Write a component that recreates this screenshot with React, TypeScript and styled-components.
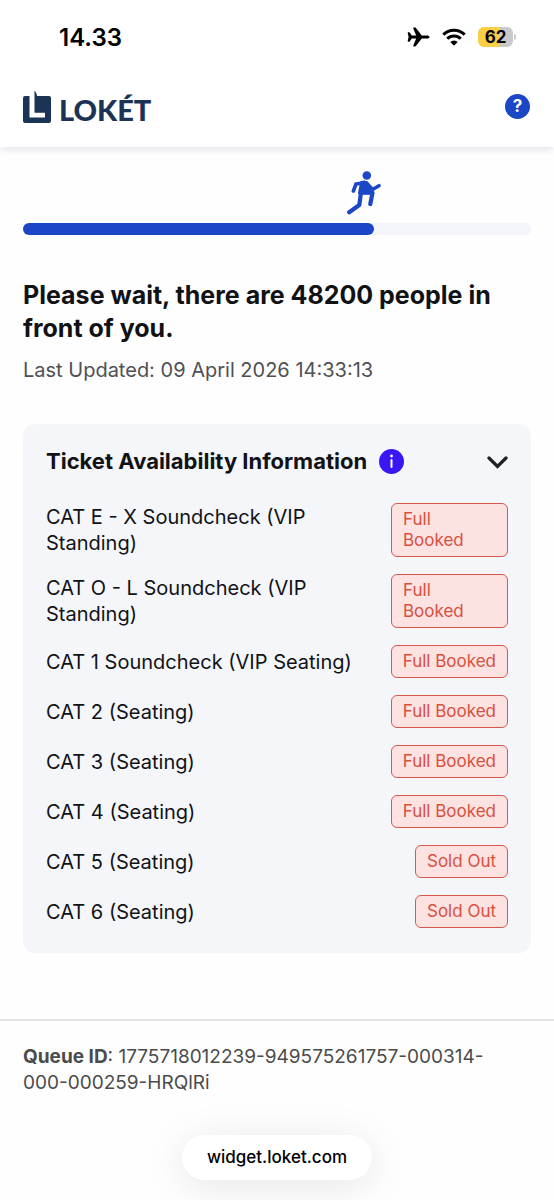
import React, { useState } from "react";
import styled, { createGlobalStyle } from "styled-components";

const GlobalStyle = createGlobalStyle`
  *, *::before, *::after { box-sizing: border-box; }
  body {
    margin: 0;
    background: #fefefe;
    color: #111216;
    font-family: Inter, "Liberation Sans", sans-serif;
  }
  button { font: inherit; color: inherit; }
`;

const Page = styled.div`
  display: flex;
  flex-direction: column;
  min-height: 100vh;
`;

const Top = styled.div`
  background: #fff;
  box-shadow: 0 2px 8px rgba(60, 65, 120, 0.16);
`;

const StatusBar = styled.div`
  display: flex;
  align-items: center;
  justify-content: space-between;
  height: 74px;
  padding: 0 41px 0 59px;
  color: #000;
`;

const Clock = styled.time`
  font-size: 24px;
  font-weight: 600;
`;

const StatusIcons = styled.div`
  display: flex;
  align-items: center;
  gap: 12px;
`;

const Battery = styled.div`
  position: relative;
  width: 35px;
  height: 20px;
  border-radius: 6px;
  background: linear-gradient(90deg, #f9cf45 62%, #c9c9cb 62%);
  font-size: 17px;
  font-weight: 700;
  line-height: 20px;
  text-align: center;

  &::after {
    content: "";
    position: absolute;
    top: 7px;
    right: -3px;
    width: 2px;
    height: 6px;
    border-radius: 0 2px 2px 0;
    background: #c9c9cb;
  }
`;

const Header = styled.header`
  display: flex;
  align-items: center;
  justify-content: space-between;
  height: 73px;
  padding: 0 24px 8px 23px;
`;

const Brand = styled.a`
  display: flex;
  align-items: center;
  gap: 7px;
  color: #1b3354;
  text-decoration: none;
`;

const Wordmark = styled.span`
  padding-top: 6px;
  font-family: Lato, sans-serif;
  font-size: 29px;
  font-weight: 900;
  line-height: 32px;
`;

const RoundButton = styled.button<{ $color: string }>`
  display: flex;
  align-items: center;
  justify-content: center;
  width: 25px;
  height: 25px;
  padding: 0;
  border: 0;
  border-radius: 50%;
  background: ${(p) => p.$color};
  color: #fff;
  font-size: 17px;
  font-weight: 700;
  line-height: 25px;
  cursor: pointer;
`;

const Main = styled.main`
  flex: 1;
  padding: 24px 23px 66px;
`;

const RunnerLane = styled.div`
  display: flex;
  height: 52px;
`;

const Distance = styled.div`
  display: flex;
  justify-content: flex-end;
  width: calc(69% + 7px);
`;

const Track = styled.div`
  height: 12px;
  border-radius: 6px;
  background: #f4f5fa;
`;

const Fill = styled.div`
  width: 69%;
  height: 100%;
  border-radius: 6px;
  background: #1b46c5;
`;

const Heading = styled.h1`
  margin: 44px 0 0;
  font-size: 25px;
  font-weight: 700;
  line-height: 33px;
`;

const Updated = styled.p`
  margin: 12px 0 0;
  color: #505054;
  font-size: 20px;
  line-height: 26px;
`;

const Card = styled.section`
  margin-top: 41px;
  padding: 20px 23px 25px;
  border-radius: 12px;
  background: #f4f6fa;
`;

const CardHeader = styled.div`
  display: flex;
  align-items: center;
  gap: 12px;
  height: 34px;
`;

const CardTitle = styled.h2`
  margin: 0;
  font-size: 22px;
  font-weight: 700;
  line-height: 34px;
`;

const Toggle = styled.button`
  display: flex;
  margin-left: auto;
  padding: 2px 0 0;
  border: 0;
  background: none;
  cursor: pointer;
`;

const Rows = styled.ul`
  display: flex;
  flex-direction: column;
  gap: 17px;
  margin: 25px 0 0;
  padding: 0;
  list-style: none;
`;

const Row = styled.li`
  display: flex;
  align-items: center;
  justify-content: space-between;
  gap: 24px;
  font-size: 20px;
  line-height: 26px;
`;

const Category = styled.span<{ $narrow?: boolean }>`
  max-width: ${(p) => (p.$narrow ? "280px" : "none")};
`;

const Chip = styled.span<{ $stacked?: boolean }>`
  flex: none;
  width: ${(p) => (p.$stacked ? "117px" : "auto")};
  padding: 5px 11px;
  border: 1px solid #d9584c;
  border-radius: 6px;
  background: #fce2e0;
  color: #d9503f;
  font-size: 17px;
  line-height: 21px;
  white-space: pre-line;
`;

const Footer = styled.footer`
  display: flex;
  flex-direction: column;
  align-items: center;
  padding: 23px 23px 20px;
  border-top: 2px solid #e4e4e4;
`;

const QueueId = styled.p`
  align-self: stretch;
  margin: 0 0 39px;
  padding-right: 24px;
  color: #4b4b4d;
  font-size: 19px;
  line-height: 26px;
`;

const Address = styled.a`
  padding: 0 25px;
  border-radius: 23px;
  background: #fff;
  box-shadow: 0 6px 40px rgba(0, 0, 0, 0.1);
  color: #000;
  font-size: 17px;
  font-weight: 500;
  line-height: 45px;
  text-decoration: none;
`;

const tickets = [
  { name: "CAT E - X Soundcheck (VIP Standing)", status: "Full\nBooked", stacked: true },
  { name: "CAT O - L Soundcheck (VIP Standing)", status: "Full\nBooked", stacked: true },
  { name: "CAT 1 Soundcheck (VIP Seating)", status: "Full Booked" },
  { name: "CAT 2 (Seating)", status: "Full Booked" },
  { name: "CAT 3 (Seating)", status: "Full Booked" },
  { name: "CAT 4 (Seating)", status: "Full Booked" },
  { name: "CAT 5 (Seating)", status: "Sold Out" },
  { name: "CAT 6 (Seating)", status: "Sold Out" },
];

const Plane = () => (
  <svg width="23" height="20" viewBox="0 0 23 20" fill="#000" aria-hidden="true">
    <path d="M22.6 10c0 .9-1.5 1.6-3.2 1.6h-4.6L8.9 19a1 1 0 0 1-.8.4H6.7c-.4 0-.6-.4-.4-.8l2.9-7H4.8l-2.1 2.9a.8.8 0 0 1-.6.3H1.2c-.4 0-.6-.3-.5-.7L1.6 10 .7 5.9c-.1-.4.1-.7.5-.7h.9c.2 0 .5.1.6.3l2.1 2.9h4.4l-2.9-7c-.2-.4 0-.8.4-.8h1.4c.3 0 .6.1.8.4l5.9 7.4h4.6c1.7 0 3.2.7 3.2 1.6Z" />
  </svg>
);

const Wifi = () => (
  <svg width="24" height="18" viewBox="0 0 24 18" aria-hidden="true">
    <g fill="none" stroke="#000" strokeWidth="3">
      <path d="M1.3 6.6a15.2 15.2 0 0 1 21.4 0" />
      <path d="M5.3 10.8a9.5 9.5 0 0 1 13.4 0" />
    </g>
    <path fill="#000" d="M12 17.8 8.3 14.1a5.3 5.3 0 0 1 7.4 0Z" />
  </svg>
);

const LogoMark = () => (
  <svg width="29" height="34" viewBox="0 0 29 34" aria-hidden="true">
    <path fill="#1b3354" d="M2 6h4.500v21.500H22v-4.700H11.500V0.500C13 2 13.800 4 14 6H26q2 0 2 2v23q0 2-2 2H2q-2 0-2-2V8q0-2 2-2Z" />
  </svg>
);

const Runner = () => (
  <svg width="34" height="44" viewBox="0 0 34 44" fill="none" stroke="#1b46c5" strokeLinecap="round" strokeLinejoin="round" aria-hidden="true">
    <circle cx="19.8" cy="4.500" r="4.300" fill="#1b46c5" stroke="none" />
    <path strokeWidth="3.6" d="M17.500 11.800 9 13 6.400 20M19.500 12 25.500 18.500 32 14.700" />
    <path fill="#1b46c5" strokeWidth="3" d="M14.500 11.500Q19 10 20.500 13L21.500 17.500 23.500 21.500 12.500 22Z" />
    <path strokeWidth="4.200" d="M14 21.500 12.300 34 2.200 41.300M15 21.500 25.500 21.800 23.300 33" />
  </svg>
);

export default function App() {
  const [open, setOpen] = useState(true);
  return (
    <Page>
      <GlobalStyle />
      <Top>
        <StatusBar>
          <Clock>14.33</Clock>
          <StatusIcons>
            <Plane />
            <Wifi />
            <Battery>62</Battery>
          </StatusIcons>
        </StatusBar>
        <Header>
          <Brand href="#">
            <LogoMark />
            <Wordmark>LOKÉT</Wordmark>
          </Brand>
          <RoundButton $color="#1b46c5" aria-label="Help">?</RoundButton>
        </Header>
      </Top>
      <Main>
        <RunnerLane>
          <Distance>
            <Runner />
          </Distance>
        </RunnerLane>
        <Track role="progressbar" aria-label="Queue progress" aria-valuenow={69} aria-valuemin={0} aria-valuemax={100}>
          <Fill />
        </Track>
        <Heading>Please wait, there are 48200 people in front of you.</Heading>
        <Updated>Last Updated: 09 April 2026 14:33:13</Updated>
        <Card>
          <CardHeader>
            <CardTitle>Ticket Availability Information</CardTitle>
            <RoundButton $color="#3a16f2" aria-label="About ticket availability">
              <svg width="25" height="25" viewBox="0 0 25 25" fill="none" stroke="#fff" strokeWidth="2" strokeLinecap="round" aria-hidden="true">
                <path d="M12.500 11v7" />
                <circle cx="12.500" cy="7" r="1.400" fill="#fff" stroke="none" />
              </svg>
            </RoundButton>
            <Toggle aria-label="Toggle ticket list" aria-expanded={open} onClick={() => setOpen(!open)}>
              <svg width="21" height="14" viewBox="0 0 21 14" fill="none" stroke="#202124" strokeWidth="3.200" strokeLinecap="round" aria-hidden="true">
                <path d="m2 3 8.500 8.500L19 3" />
              </svg>
            </Toggle>
          </CardHeader>
          {open && (
            <Rows>
              {tickets.map((t) => (
                <Row key={t.name}>
                  <Category $narrow={t.stacked}>{t.name}</Category>
                  <Chip $stacked={t.stacked}>{t.status}</Chip>
                </Row>
              ))}
            </Rows>
          )}
        </Card>
      </Main>
      <Footer>
        <QueueId>
          <strong>Queue ID</strong>: 1775718012239-949575261757-000314-000-000259-HRQlRi
        </QueueId>
        <Address href="#">widget.loket.com</Address>
      </Footer>
    </Page>
  );
}
